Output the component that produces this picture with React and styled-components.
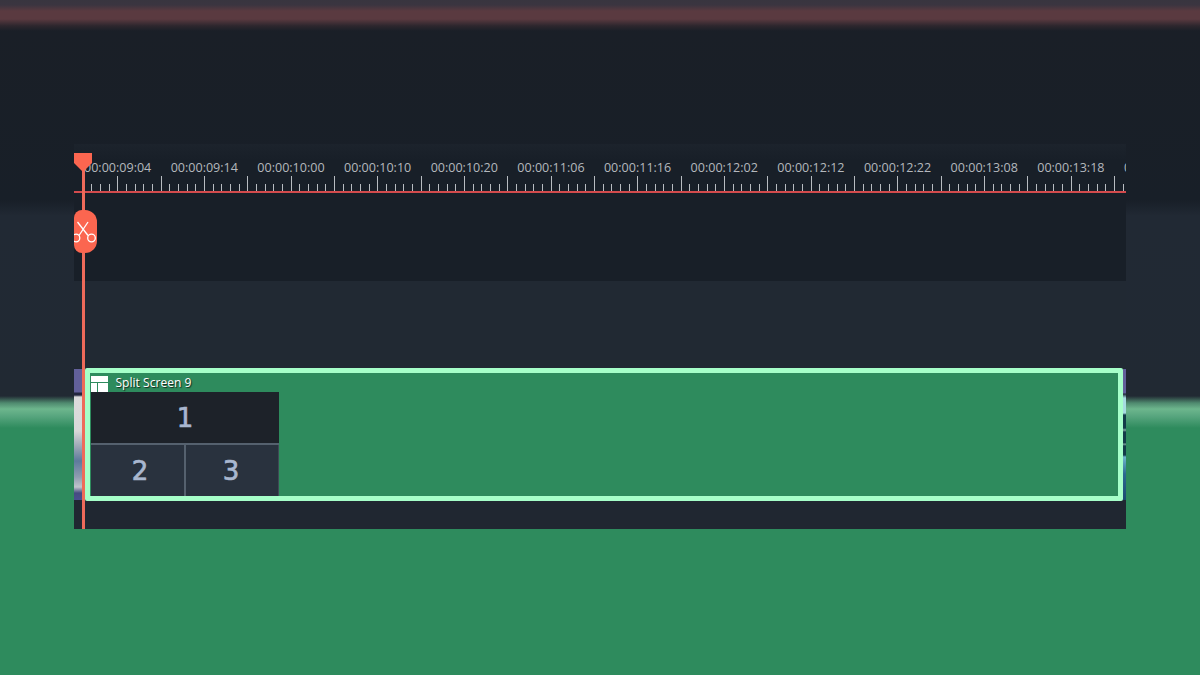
import React from "react";
import styled, { createGlobalStyle } from "styled-components";

const LABELS = [
  "00:00:09:04",
  "00:00:09:14",
  "00:00:10:00",
  "00:00:10:10",
  "00:00:10:20",
  "00:00:11:06",
  "00:00:11:16",
  "00:00:12:02",
  "00:00:12:12",
  "00:00:12:22",
  "00:00:13:08",
  "00:00:13:18",
  "00:00:14:04",
];

const STEP = 8.667;
const TICKS = Array.from({ length: 121 }, (_, i) => i + 1);

export default function App() {
  return (
    <Page>
      <GlobalStyle />
      <Timeline>
        <Ruler>
          <Labels>
            {LABELS.map((label) => (
              <Label key={label}>{label}</Label>
            ))}
          </Labels>
          <Ticks width="1052" height="15">
            {TICKS.map((i) => (
              <line
                key={i}
                x1={Math.round(i * STEP) + 0.5}
                x2={Math.round(i * STEP) + 0.5}
                y1={i % 5 === 0 ? 0 : 8}
                y2="15"
              />
            ))}
          </Ticks>
        </Ruler>
        <EmptyTrack />
        <TrackGap />
        <ClipRow>
          <ThumbLeft />
          <Clip>
            <ClipHeader>
              <LayoutIcon width="17" height="17" viewBox="0 0 17 17">
                <path d="M0 0h17v6H0z" />
                <path d="M0 7h6v10H0z" />
                <path d="M7 7h10v10H7z" />
              </LayoutIcon>
              <ClipTitle>Split Screen 9</ClipTitle>
            </ClipHeader>
            <SplitGrid>
              <SplitCell $wide>1</SplitCell>
              <SplitCell>2</SplitCell>
              <SplitCell>3</SplitCell>
            </SplitGrid>
          </Clip>
          <ThumbRight />
        </ClipRow>
        <BottomBar />

        <Playhead>
          <PlayheadCap width="18" height="19" viewBox="0 0 18 19">
            <path d="M0 0h18v10l-9 9-9-9z" />
          </PlayheadCap>
        </Playhead>
        <CutBadge>
          <svg width="23" height="43" viewBox="0 0 23 43" fill="none" stroke="#fff" strokeWidth="1.3">
            <path d="M3.5 12 14 25.5" />
            <path d="M14 12 5 25.5" />
            <circle cx="2" cy="28" r="3.8" />
            <circle cx="17.5" cy="28" r="3.8" />
          </svg>
        </CutBadge>
      </Timeline>
    </Page>
  );
}

const GlobalStyle = createGlobalStyle`
  html, body {
    margin: 0;
    padding: 0;
  }
  body {
    font-family: "Open Sans", "Liberation Sans", sans-serif;
    overflow: hidden;
  }
`;

const Page = styled.div`
  box-sizing: border-box;
  height: 675px;
  padding: 144px 74px 0;
  background: linear-gradient(
    to bottom,
    #38353f 0,
    #3b3540 5px,
    #5a3a40 11px,
    #5a3a40 19px,
    #2c262d 26px,
    #1a1f27 31px,
    #181f28 200px,
    #212934 216px,
    #212933 396px,
    #4f8a6f 403px,
    #6db68d 409px,
    #58a67f 416px,
    #2e8b5d 428px,
    #2e8b5d 675px
  );
`;

const Timeline = styled.div`
  position: relative;
  display: flex;
  flex-direction: column;
  width: 1052px;
  height: 385px;
  overflow: hidden;
`;

const Ruler = styled.div`
  box-sizing: border-box;
  display: flex;
  flex-direction: column;
  height: 49px;
  padding-top: 15px;
  background: linear-gradient(to bottom, #1c232c 0, #1a212a 8px, #181f28 16px);
  border-bottom: 2px solid #d34b4d;
`;

const Labels = styled.div`
  display: flex;
  padding-left: 10px;
  height: 17px;
`;

const Label = styled.span`
  flex: 0 0 86.67px;
  font-size: 12.55px;
  line-height: 18px;
  color: #b4b8bd;
  white-space: nowrap;
`;

const Ticks = styled.svg`
  display: block;
  flex: none;
  stroke: #b8bcc1;
  stroke-width: 1;
`;

const EmptyTrack = styled.div`
  height: 88px;
  background: #181f28;
`;

const TrackGap = styled.div`
  height: 87px;
  background: #212933;
`;

const ClipRow = styled.div`
  display: flex;
  height: 133px;
  background: #202731;
`;

const Thumb = styled.div`
  flex: none;
  margin: 1px 0;
`;

const ThumbLeft = styled(Thumb)`
  width: 11px;
  background: linear-gradient(
    to bottom,
    #62609a 0,
    #62609a 23px,
    #23263f 24px,
    #23263f 26px,
    #dcdcdc 28px,
    #d8d8d8 62px,
    #9aa5b5 78px,
    #5d7a9c 92px,
    #8f9cb0 108px,
    #c0c4cc 118px,
    #454b80 124px,
    #4a4e90 131px
  );
`;

const ThumbRight = styled(Thumb)`
  width: 3px;
  background: linear-gradient(
    to bottom,
    #62609a 0,
    #62609a 24px,
    #1f2838 25px,
    #a6dce0 29px,
    #a6dce0 44px,
    #123c48 46px,
    #123c48 59px,
    #7fa8a0 61px,
    #123c48 63px,
    #123c48 74px,
    #7fa8a0 75px,
    #123c48 77px,
    #123c48 86px,
    #6fb6cc 88px,
    #2c6a90 105px,
    #1a4a70 131px
  );
`;

const Clip = styled.div`
  box-sizing: border-box;
  flex: 1;
  display: flex;
  flex-direction: column;
  border: 5px solid #a6ffc9;
  border-radius: 2px;
  background: #2e8b5d;
  padding: 3px 0 0 1px;
`;

const ClipHeader = styled.div`
  display: flex;
  align-items: flex-start;
  gap: 7.5px;
  height: 16px;
`;

const LayoutIcon = styled.svg`
  flex: none;
  fill: #fff;
`;

const ClipTitle = styled.span`
  margin-top: -1px;
  font-size: 12px;
  line-height: 16px;
  letter-spacing: 0.03px;
  color: #fff;
  text-shadow: 1px 1px 1px #14241a;
`;

const SplitGrid = styled.div`
  display: grid;
  grid-template-columns: 95px 93px;
  grid-template-rows: 53px 51px;
  width: 188px;
`;

const SplitCell = styled.div`
  box-sizing: border-box;
  display: flex;
  align-items: center;
  justify-content: center;
  font-family: "DejaVu Sans", sans-serif;
  font-size: 26px;
  color: #a9b7cf;
  -webkit-text-stroke: 0.7px #a9b7cf;
  background: ${(p) => (p.$wide ? "#1d2229" : "#29323e")};
  border-bottom: ${(p) => (p.$wide ? "2px solid #55616e" : "none")};
  grid-column: ${(p) => (p.$wide ? "1 / 3" : "auto")};
  &:nth-child(2) {
    border-right: 2px solid #55616e;
    padding-left: 5px;
  }
  &:last-child {
    border-right: 1px solid #3f4955;
    padding-right: 2px;
  }
`;

const BottomBar = styled.div`
  flex: 1;
  background: #202731;
`;

const Playhead = styled.div`
  position: absolute;
  left: 8px;
  top: 9px;
  bottom: 0;
  width: 3px;
  background: #ee6a5a;
`;

const PlayheadCap = styled.svg`
  position: absolute;
  left: -8px;
  top: 0;
  fill: #fb6650;
`;

const CutBadge = styled.div`
  position: absolute;
  left: 0;
  top: 66px;
  width: 23px;
  height: 43px;
  background: #fb6650;
  border-radius: 8px 12px 12px 8px;
  svg {
    display: block;
  }
`;
